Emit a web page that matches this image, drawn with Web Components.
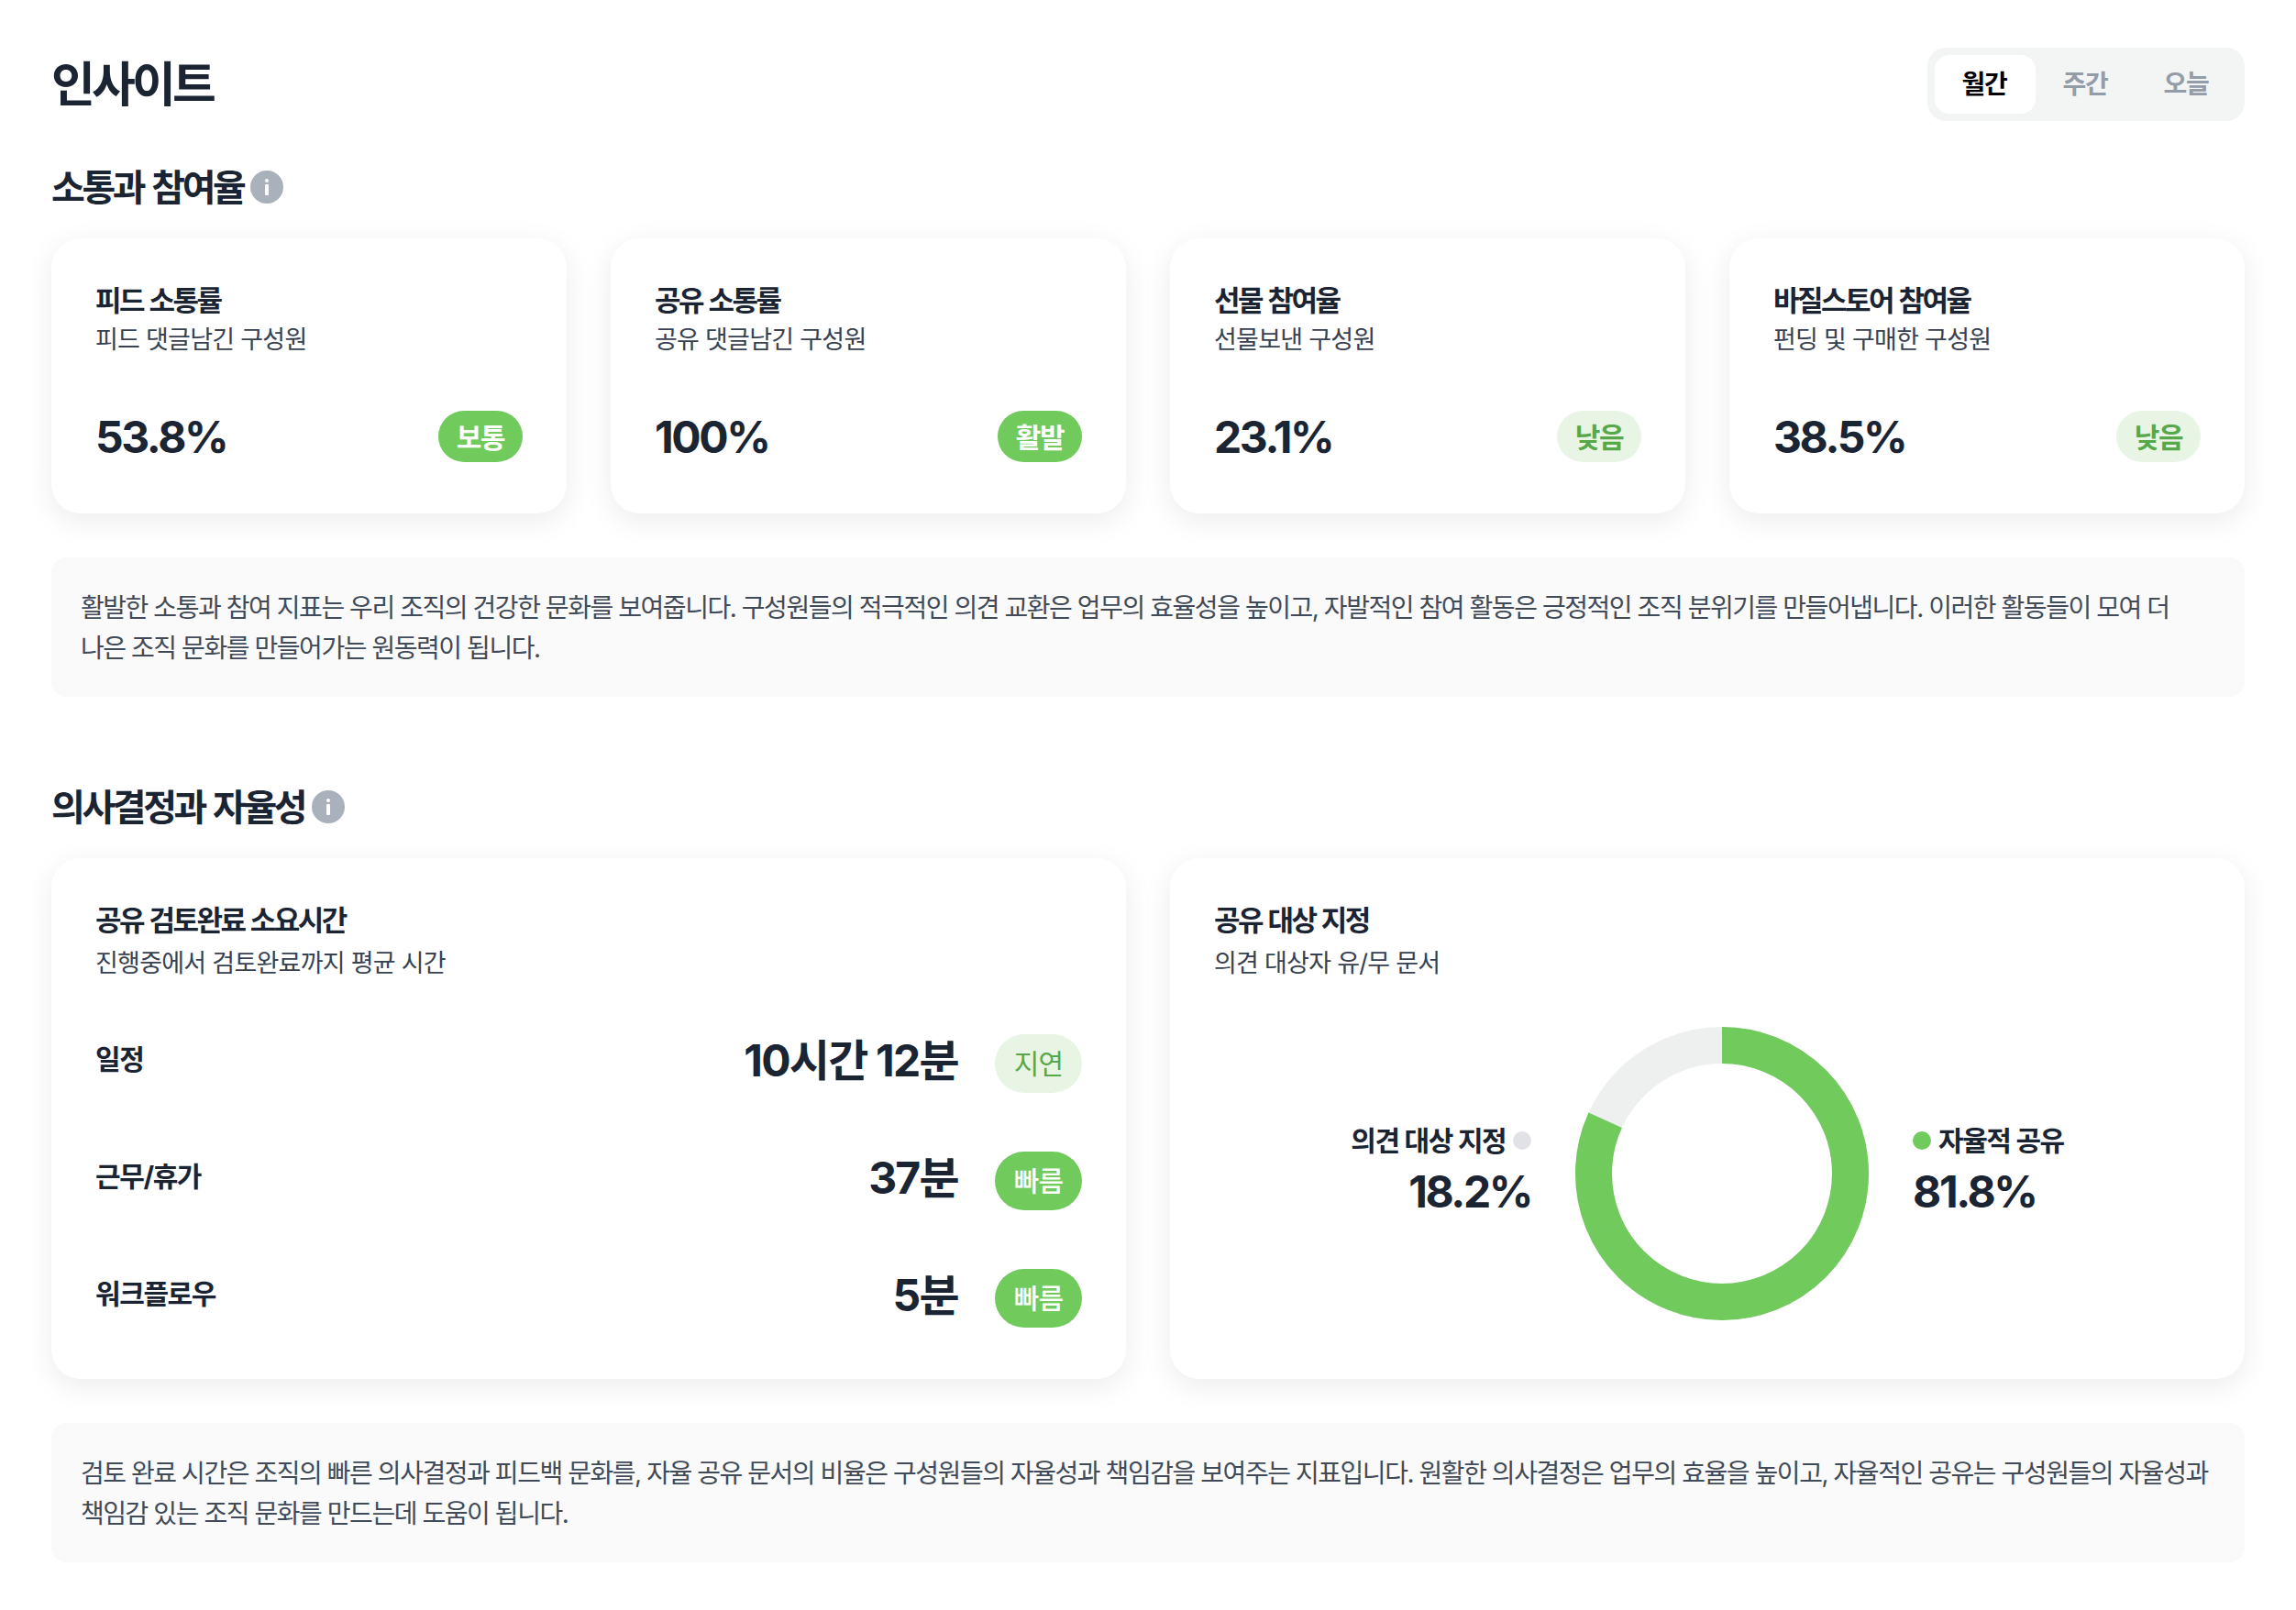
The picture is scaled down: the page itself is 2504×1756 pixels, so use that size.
<!DOCTYPE html>
<html lang="ko">
<head>
<meta charset="utf-8">
<title>인사이트</title>
<style>
html,body{ margin:0; background:#fff; }
body{ font-family:Inter,"Noto Sans CJK KR","Noto Sans",sans-serif; color:#1a2433; }
</style>
</head>
<body>
<insight-page>
    <page-header slot="header" title="인사이트"></page-header>

    <section-title>소통과 참여율</section-title>
    <card-row columns="4">
        <metric-card heading="피드 소통률" sub="피드 댓글남긴 구성원" value="53.8%"><status-pill kind="solid" strong>보통</status-pill></metric-card>
        <metric-card heading="공유 소통률" sub="공유 댓글남긴 구성원" value="100%"><status-pill kind="solid" strong>활발</status-pill></metric-card>
        <metric-card heading="선물 참여율" sub="선물보낸 구성원" value="23.1%"><status-pill kind="soft" strong>낮음</status-pill></metric-card>
        <metric-card heading="바질스토어 참여율" sub="펀딩 및 구매한 구성원" value="38.5%"><status-pill kind="soft" strong>낮음</status-pill></metric-card>
    </card-row>
    <note-box>활발한 소통과 참여 지표는 우리 조직의 건강한 문화를 보여줍니다. 구성원들의 적극적인 의견 교환은 업무의 효율성을 높이고, 자발적인 참여 활동은 긍정적인 조직 분위기를 만들어냅니다. 이러한 활동들이 모여 더<br>나은 조직 문화를 만들어가는 원동력이 됩니다.</note-box>

    <section-title class="next">의사결정과 자율성</section-title>
    <card-row columns="2">
        <panel-card heading="공유 검토완료 소요시간" sub="진행중에서 검토완료까지 평균 시간">
            <time-row label="일정" value="10시간 12분"><status-pill kind="soft" tall>지연</status-pill></time-row>
            <time-row label="근무/휴가" value="37분"><status-pill kind="solid" tall medium>빠름</status-pill></time-row>
            <time-row label="워크플로우" value="5분"><status-pill kind="solid" tall medium>빠름</status-pill></time-row>
        </panel-card>
        <panel-card heading="공유 대상 지정" sub="의견 대상자 유/무 문서">
            <donut-chart></donut-chart>
        </panel-card>
    </card-row>
    <note-box>검토 완료 시간은 조직의 빠른 의사결정과 피드백 문화를, 자율 공유 문서의 비율은 구성원들의 자율성과 책임감을 보여주는 지표입니다. 원활한 의사결정은 업무의 효율을 높이고, 자율적인 공유는 구성원들의 자율성과<br>책임감 있는 조직 문화를 만드는데 도움이 됩니다.</note-box>
</insight-page>

<script>
class InsightPage extends HTMLElement {
    constructor() {
        super();
        this.attachShadow({ mode: 'open' }).innerHTML = `
        <style>
        :host{
            display:block;
            box-sizing:border-box;
            padding:52px 56px 48px;
        }
        ::slotted(section-title){ margin-top:48px; }
        ::slotted(section-title.next){ margin-top:96px; }
        ::slotted(note-box){ margin-top:48px; }
        </style>
        <slot name="header"></slot>
        <slot></slot>
        `
    }
}

class PageHeader extends HTMLElement {
    constructor() {
        super();
        this.attachShadow({ mode: 'open' }).innerHTML = `
        <style>
        :host{
            display:flex;
            justify-content:space-between;
            align-items:center;
            height:80px;
        }
        h1{
            margin:0;
            padding-top:2px;
            font-size:52px;
            font-weight:700;
            line-height:78px;
            letter-spacing:-3.8px;
        }
        #tabs{
            display:flex;
            padding:8px;
            border-radius:20px;
            background:#f3f5f5;
        }
        span{
            width:110px;
            height:64px;
            line-height:65px;
            text-align:center;
            text-indent:-2px;
            font-size:28px;
            font-weight:600;
            letter-spacing:-1.2px;
            color:#949ca8;
            border-radius:16px;
        }
        span.on{ background:#fff; color:#000; font-weight:700; }
        </style>
        <h1></h1>
        <div id="tabs"><span class="on">월간</span><span>주간</span><span>오늘</span></div>
        `
    }
    connectedCallback() {
        this.shadowRoot.querySelector('h1').textContent = this.getAttribute('title');
    }
}

class SectionTitle extends HTMLElement {
    constructor() {
        super();
        this.attachShadow({ mode: 'open' }).innerHTML = `
        <style>
        :host{
            display:flex;
            align-items:center;
            gap:8px;
            height:48px;
            font-size:40px;
            font-weight:700;
            letter-spacing:-3.4px;
            word-spacing:3px;
            margin-bottom:32px;
        }
        span{ padding-bottom:5px; }
        i{
            width:36px;
            height:36px;
            border-radius:50%;
            background:#a9b1bc;
            display:flex;
            align-items:center;
            justify-content:center;
        }
        </style>
        <span><slot></slot></span>
        <i><svg width="6" height="18" viewBox="0 0 6 18"><rect x="1" y="0" width="4" height="4" rx="2" fill="#fff"/><rect x="1" y="6" width="4" height="12" rx="1" fill="#fff"/></svg></i>
        `
    }
}

class CardRow extends HTMLElement {
    constructor() {
        super();
        this.attachShadow({ mode: 'open' }).innerHTML = `
        <style>
        :host{ display:grid; gap:48px; }
        :host([columns="4"]){ grid-template-columns:repeat(4,1fr); }
        :host([columns="2"]){ grid-template-columns:repeat(2,1fr); }
        </style>
        <slot></slot>
        `
    }
}

const cardStyle = `
    :host{
        display:block;
        box-sizing:border-box;
        padding:48px;
        background:#fff;
        border-radius:32px;
        box-shadow:0 8px 32px rgba(0,0,0,.08);
    }
    h3{
        margin:0;
        padding-top:1px;
        font-size:31px;
        font-weight:700;
        line-height:38px;
        letter-spacing:-2.5px;
        word-spacing:1.5px;
    }
    p{
        margin:0;
        font-size:27px;
        font-weight:400;
        line-height:42px;
        letter-spacing:-.75px;
        color:#374151;
    }
`;

class MetricCard extends HTMLElement {
    constructor() {
        super();
        this.attachShadow({ mode: 'open' }).innerHTML = `
        <style>
        ${cardStyle}
        :host{ height:300px; }
        p{ margin-top:3px; }
        #bottom{
            display:flex;
            justify-content:space-between;
            align-items:center;
            margin-top:48px;
            height:72px;
        }
        b{
            font-size:48px;
            font-weight:700;
            letter-spacing:-2.4px;
        }
        </style>
        <h3></h3>
        <p></p>
        <div id="bottom"><b></b><slot></slot></div>
        `
    }
    connectedCallback() {
        this.shadowRoot.querySelector('h3').textContent = this.getAttribute('heading');
        this.shadowRoot.querySelector('p').textContent = this.getAttribute('sub');
        this.shadowRoot.querySelector('b').textContent = this.getAttribute('value');
    }
}

class PanelCard extends HTMLElement {
    constructor() {
        super();
        this.attachShadow({ mode: 'open' }).innerHTML = `
        <style>
        ${cardStyle}
        :host{ height:568px; }
        p{ margin-top:7px; }
        #body{
            display:flex;
            flex-direction:column;
            gap:48px;
            margin-top:48px;
        }
        </style>
        <h3></h3>
        <p></p>
        <div id="body"><slot></slot></div>
        `
    }
    connectedCallback() {
        this.shadowRoot.querySelector('h3').textContent = this.getAttribute('heading');
        this.shadowRoot.querySelector('p').textContent = this.getAttribute('sub');
    }
}

class TimeRow extends HTMLElement {
    constructor() {
        super();
        this.attachShadow({ mode: 'open' }).innerHTML = `
        <style>
        :host{
            display:flex;
            align-items:center;
            height:80px;
        }
        #label{
            flex:1;
            padding-bottom:14px;
            font-size:30px;
            font-weight:700;
            letter-spacing:-1.4px;
        }
        b{
            padding-bottom:14px;
            font-size:48px;
            font-weight:700;
            letter-spacing:-1.8px;
            margin-right:40px;
        }
        </style>
        <div id="label"></div><b></b><slot></slot>
        `
    }
    connectedCallback() {
        this.shadowRoot.querySelector('#label').textContent = this.getAttribute('label');
        this.shadowRoot.querySelector('b').textContent = this.getAttribute('value');
    }
}

class StatusPill extends HTMLElement {
    constructor() {
        super();
        this.attachShadow({ mode: 'open' }).innerHTML = `
        <style>
        :host{
            display:inline-flex;
            align-items:center;
            justify-content:center;
            box-sizing:border-box;
            height:56px;
            padding:0 20px 2px;
            border-radius:28px;
            font-size:30px;
            font-weight:400;
            letter-spacing:-1.5px;
        }
        :host([strong]){ font-weight:600; }
        :host([medium]){ font-weight:500; }
        :host([tall]){ height:64px; border-radius:32px; padding:0 21px 4px; letter-spacing:-1px; }
        :host([kind="solid"]){ background:#70ca5c; color:#fff; }
        :host([kind="soft"]){ background:#e8f5e5; color:#57a848; }
        </style>
        <slot></slot>
        `
    }
}

class NoteBox extends HTMLElement {
    constructor() {
        super();
        this.attachShadow({ mode: 'open' }).innerHTML = `
        <style>
        :host{
            display:block;
            padding:33px 32px 31px;
            border-radius:16px;
            background:#fafafa;
            font-size:28px;
            line-height:44px;
            letter-spacing:-1.45px;
            color:#414a58;
            white-space:nowrap;
        }
        </style>
        <slot></slot>
        `
    }
}

class DonutChart extends HTMLElement {
    constructor() {
        super();
        this.attachShadow({ mode: 'open' }).innerHTML = `
        <style>
        :host{
            display:flex;
            justify-content:center;
            align-items:center;
            gap:48px;
            height:320px;
        }
        .legend{ display:flex; flex-direction:column; gap:1px; padding-bottom:5px; }
        .legend.left{ align-items:flex-end; }
        .name{
            display:flex;
            align-items:center;
            gap:8px;
            height:44px;
            font-size:30px;
            font-weight:600;
            letter-spacing:-1.5px;
        }
        .name span{ padding-bottom:4px; }
        .name i{ width:20px; height:20px; border-radius:50%; }
        b{
            font-size:48px;
            font-weight:700;
            line-height:66px;
            letter-spacing:-2.4px;
        }
        svg{ display:block; flex:none; }
        </style>
        <div class="legend left">
            <div class="name"><span>의견 대상 지정</span><i style="background:#e0e2e6"></i></div>
            <b>18.2%</b>
        </div>
        <svg width="320" height="320" viewBox="0 0 320 320">
            <circle cx="160" cy="160" r="140" fill="none" stroke="#eef0f0" stroke-width="40"/>
            <circle cx="160" cy="160" r="140" fill="none" stroke="#70ca5c" stroke-width="40"
                stroke-dasharray="719.5 879.65" transform="rotate(-90 160 160)"/>
        </svg>
        <div class="legend">
            <div class="name"><i style="background:#70ca5c"></i><span>자율적 공유</span></div>
            <b>81.8%</b>
        </div>
        `
    }
}

customElements.define('insight-page', InsightPage);
customElements.define('page-header', PageHeader);
customElements.define('section-title', SectionTitle);
customElements.define('card-row', CardRow);
customElements.define('metric-card', MetricCard);
customElements.define('panel-card', PanelCard);
customElements.define('time-row', TimeRow);
customElements.define('status-pill', StatusPill);
customElements.define('note-box', NoteBox);
customElements.define('donut-chart', DonutChart);
</script>
</body>
</html>
